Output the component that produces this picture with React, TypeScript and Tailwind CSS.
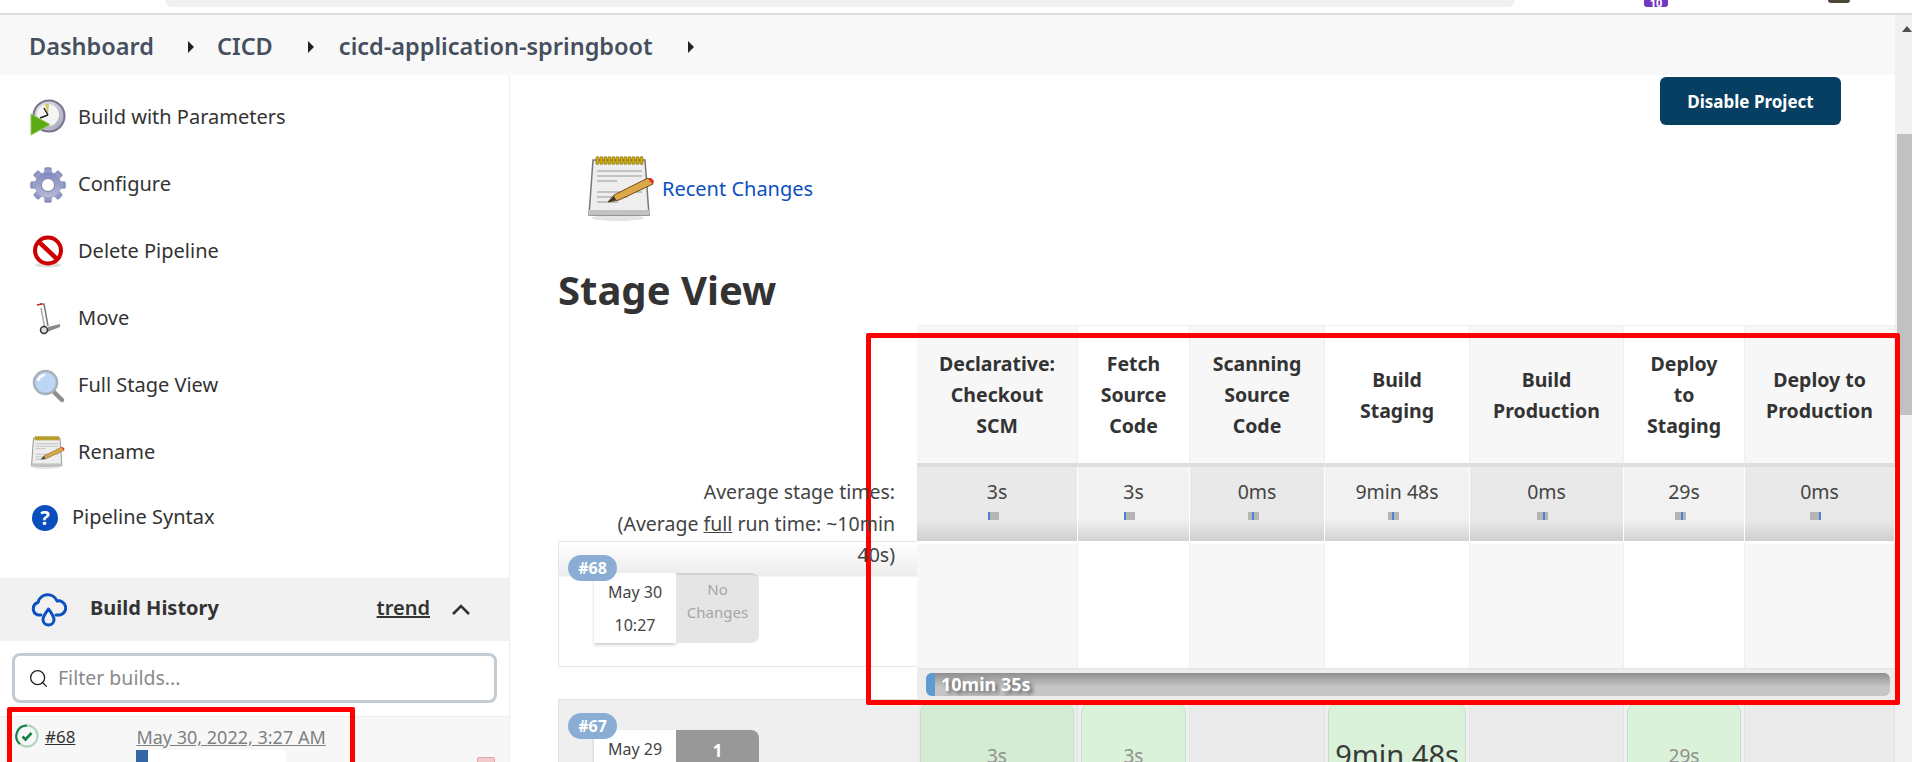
// Jenkins pipeline page with the stage view, annotated with red boxes

import { Search } from 'lucide-react';

// ---------------------------------------------------------------------------
// Data
// ---------------------------------------------------------------------------

const stages = [
  { name: ['Declarative:', 'Checkout', 'SCM'], avg: '3s', mark: 'ml-0', run: '3s', runBg: 'bg-[#d3ecd3]' },
  { name: ['Fetch', 'Source', 'Code'], avg: '3s', mark: 'ml-0', run: '3s', runBg: 'bg-[#d9f2d9]' },
  { name: ['Scanning', 'Source', 'Code'], avg: '0ms', mark: 'ml-[4px]', run: '', runBg: '' },
  { name: ['Build', 'Staging'], avg: '9min 48s', mark: 'ml-[4px]', run: '9min 48s', runBg: 'bg-[#d9f2d9]' },
  { name: ['Build', 'Production'], avg: '0ms', mark: 'ml-[6px]', run: '', runBg: '' },
  { name: ['Deploy', 'to', 'Staging'], avg: '29s', mark: 'ml-[6px]', run: '29s', runBg: 'bg-[#d9f2d9]' },
  { name: ['Deploy to', 'Production'], avg: '0ms', mark: 'ml-[9px]', run: '', runBg: '' },
];

// ---------------------------------------------------------------------------
// Icons
// ---------------------------------------------------------------------------

function BuildIcon() {
  return (
    <svg width="36" height="37" viewBox="0 0 36 37">
      <defs>
        <linearGradient id="clockFace" x1="0" y1="0" x2="1" y2="1">
          <stop offset="0" stopColor="#e4e4ea" />
          <stop offset="1" stopColor="#a5a5b6" />
        </linearGradient>
      </defs>
      <circle cx="19" cy="17" r="15.5" fill="url(#clockFace)" stroke="#77728e" strokeWidth="2" />
      <circle cx="18" cy="16" r="11" fill="#f5f5f3" />
      <path d="M18 16 L15 5 A11 11 0 0 1 19 5 Z" fill="#d8c46c" />
      <path d="M18 16 L14 9 M18 16 L10 19" stroke="#222" strokeWidth="1.5" fill="none" />
      <path d="M1 15 L20 25.5 L1 36 Z" fill="#5cab12" stroke="#8fc760" strokeWidth="1" />
    </svg>
  );
}

function GearIcon() {
  return (
    <svg width="36" height="36" viewBox="0 0 36 36">
      <defs>
        <linearGradient id="gearFill" x1="0" y1="0" x2="0" y2="1">
          <stop offset="0" stopColor="#7f8abf" />
          <stop offset="1" stopColor="#b9b9d8" />
        </linearGradient>
      </defs>
      <g fill="url(#gearFill)" stroke="#8a8fa8" strokeWidth="0.5">
        {[0, 45, 90, 135, 180, 225, 270, 315].map((a) => (
          <rect key={a} x="14.5" y="0.5" width="7" height="8" rx="1.5" transform={`rotate(${a} 18 18)`} />
        ))}
        <circle cx="18" cy="18" r="13" />
      </g>
      <circle cx="18" cy="18" r="6.5" fill="#fff" stroke="#7d7f95" strokeWidth="1" />
    </svg>
  );
}

function DeleteIcon() {
  return (
    <svg width="32" height="33" viewBox="0 0 32 33">
      <ellipse cx="16" cy="30" rx="13" ry="2.5" fill="#ddd" />
      <circle cx="16" cy="15.5" r="13" fill="#fff" stroke="#cc0000" strokeWidth="4" />
      <path d="M7 7 L25 24" stroke="#cc0000" strokeWidth="4.5" />
    </svg>
  );
}

function MoveIcon() {
  return (
    <svg width="27" height="32" viewBox="0 0 27 32">
      <path d="M5 1 L9 1 L13 23" stroke="#777" strokeWidth="1.5" fill="none" />
      <path d="M2 2 L7 1" stroke="#cc2222" strokeWidth="1.5" />
      <path d="M6 5 L10 26" stroke="#aaa" strokeWidth="1.5" />
      <path d="M13 24 L25 21 L25 24 L12 29 Z" fill="#8a8a8a" />
      <circle cx="9" cy="27" r="3.5" fill="#ddd" stroke="#333" strokeWidth="1.5" />
    </svg>
  );
}

function MagnifierIcon() {
  return (
    <svg width="33" height="34" viewBox="0 0 33 34">
      <path d="M20 21 L30 31" stroke="#8e8e8e" strokeWidth="4.5" strokeLinecap="round" />
      <circle cx="13.5" cy="13.5" r="11.5" fill="#bcd6f5" stroke="#a9b2bb" strokeWidth="2.5" />
      <path d="M6 12 A8 8 0 0 1 13 6" stroke="#fff" strokeWidth="2.5" fill="none" />
    </svg>
  );
}

function NotepadIcon({ width, height }: { width: number; height: number }) {
  return (
    <svg width={width} height={height} viewBox="0 0 67 65">
      <ellipse cx="30" cy="62" rx="26" ry="3" fill="#e4e4e4" />
      <path d="M5 4 L57 4 L61 59 L1 59 Z" fill="#eeeeee" stroke="#777" strokeWidth="1.5" />
      <rect x="1" y="54" width="60" height="5" fill="#c2c2c2" />
      {[0, 1, 2, 3, 4, 5, 6, 7, 8, 9, 10, 11].map((i) => (
        <rect key={i} x={8 + i * 4} y="0.5" width="3" height="8" rx="1.5" fill="#d3b10f" stroke="#806a00" strokeWidth="0.7" />
      ))}
      <path d="M9 15 H54 M9 20 H54 M9 25 H29 M9 36 H54 M9 41 H40 M9 46 H30" stroke="#b4b4b4" strokeWidth="1.4" />
      <path d="M20 46 L26 39 L60 22 L65 28 L31 44 Z" fill="#dba94a" stroke="#6d4b12" strokeWidth="1" />
      <path d="M60 22 L65 28 L66 25 L63 22 Z" fill="#e22" />
      <path d="M20 46 L26 40 L28 44 Z" fill="#333" />
    </svg>
  );
}

function HelpIcon() {
  return (
    <span className="flex h-[26px] w-[26px] items-center justify-center rounded-full bg-[#0b4fbf] text-[20px] leading-none font-bold text-white">
      ?
    </span>
  );
}

function CloudIcon() {
  return (
    <svg width="37" height="35" viewBox="0 0 37 35" fill="none" stroke="#0b52c0" strokeWidth="3" strokeLinecap="round" strokeLinejoin="round">
      <path d="M11 23 H8 A6.5 6.5 0 0 1 8 10.5 A10 10 0 0 1 27 9 A7 7 0 0 1 30 23 H26" />
      <path d="M18.5 17 C15 22 13 24.5 13 27.5 A5.5 5.5 0 0 0 24 27.5 C24 24.5 22 22 18.5 17 Z" />
    </svg>
  );
}

function CheckIcon() {
  return (
    <svg width="24" height="24" viewBox="0 0 24 24" fill="none">
      <circle cx="12" cy="12" r="10.5" stroke="#a7d6b9" strokeWidth="2" />
      <path d="M12 1.5 A10.5 10.5 0 0 0 5 20" stroke="#138347" strokeWidth="2" />
      <path d="M7.5 12.5 L10.5 15.5 L16.5 9" stroke="#138347" strokeWidth="2.6" />
    </svg>
  );
}

function Caret() {
  return (
    <svg width="6" height="12" viewBox="0 0 6 12">
      <path d="M0 0 L6 6 L0 12 Z" fill="#222" />
    </svg>
  );
}

// ---------------------------------------------------------------------------
// Sidebar
// ---------------------------------------------------------------------------

function SideItem({ icon, label }: { icon: React.ReactNode; label: string }) {
  return (
    <div className="flex h-[67px] flex-none items-center pl-[30px]">
      <span className="flex w-[36px] justify-center">{icon}</span>
      <span className="ml-[12px] pb-[1px] text-[20px] text-[#333]">{label}</span>
    </div>
  );
}

function Sidebar() {
  return (
    <aside className="flex w-[510px] flex-none flex-col border-r border-[#eeeeee] pt-[9px]">
      <SideItem icon={<BuildIcon />} label="Build with Parameters" />
      <SideItem icon={<GearIcon />} label="Configure" />
      <SideItem icon={<DeleteIcon />} label="Delete Pipeline" />
      <SideItem icon={<MoveIcon />} label="Move" />
      <SideItem icon={<MagnifierIcon />} label="Full Stage View" />
      <SideItem icon={<NotepadIcon width={34} height={33} />} label="Rename" />
      <div className="flex h-[63px] flex-none items-center pl-[32px]">
        <HelpIcon />
        <span className="ml-[14px] pb-[1px] text-[20px] text-[#333]">Pipeline Syntax</span>
      </div>

      <div className="mt-[29px] flex h-[63px] flex-none items-center bg-[#f1f1f1] pr-[39px] pl-[30px]">
        <CloudIcon />
        <span className="ml-[23px] pb-[4px] text-[20px] font-bold text-[#333]">Build History</span>
        <span className="ml-auto pb-[4px] text-[20px] font-semibold text-[#333] underline">trend</span>
        <svg className="ml-[22px]" width="18" height="11" viewBox="0 0 18 11" fill="none" stroke="#333" strokeWidth="2.6">
          <path d="M1 10 L9 2 L17 10" />
        </svg>
      </div>

      <div className="mx-[12px] mt-[12px] flex h-[50px] flex-none items-center rounded-[8px] border-[3px] border-[#c3ccd3] bg-white pl-[13px]">
        <Search size={21} strokeWidth={1.5} className="text-[#222]" />
        <span className="ml-[9px] text-[19.5px] text-[#8a8a8a]">Filter builds...</span>
      </div>

      <div className="mt-[13px] flex-1 border-t border-[#eeeeee] bg-[#f7f7f7]">
        <div className="flex items-start pt-[7px] pl-[15px]">
          <CheckIcon />
          <span className="ml-[6px] text-[17px] leading-[26px] text-[#333] underline">#68</span>
          <div className="ml-[61px] flex flex-col">
            <span className="text-[18px] leading-[26px] whitespace-nowrap text-[#808080] underline">May 30, 2022, 3:27 AM</span>
            <div className="h-[12px] w-[150px] bg-white">
              <div className="h-full w-[12px] bg-[#3465a4]" />
            </div>
          </div>
          <div className="mt-[33px] ml-[151px] h-[8px] w-[18px] rounded-t-[2px] border border-[#e6a5a5] bg-[#f3c9c9]" />
        </div>
      </div>
    </aside>
  );
}

// ---------------------------------------------------------------------------
// Stage view
// ---------------------------------------------------------------------------

function ChangeBox({ date, time, children, dark }: { date: string; time: string; children: React.ReactNode; dark?: boolean }) {
  return (
    <div className="ml-[35px] flex h-[70px] w-[165px]">
      <div className="flex w-[82px] flex-col items-center bg-white pt-[3px] text-[16px] leading-[33px] text-[#444] shadow-[0_2px_3px_rgba(0,0,0,0.2)]">
        <span>{date}</span>
        <span>{time}</span>
      </div>
      <div
        className={
          dark
            ? 'flex w-[83px] justify-center rounded-r-[8px] bg-[#989898] pt-[8px] text-[17px] font-bold text-white'
            : 'flex w-[83px] justify-center rounded-r-[8px] border-t-2 border-[#d2d2d2] bg-[#e5e5e5] pt-[3px] text-center text-[15px] leading-[23px] text-[#a5a5a5]'
        }
      >
        {children}
      </div>
    </div>
  );
}

function BuildBadge({ label }: { label: string }) {
  return (
    <span className="absolute top-[13px] left-[9px] z-10 flex h-[26px] w-[49px] items-center justify-center rounded-full bg-[#8aaed3] text-[16px] font-bold text-white">
      {label}
    </span>
  );
}

function StageGrid() {
  return (
    <div className="ml-[48px] grid grid-cols-[359px_161px_112px_135px_145px_154px_121px_150px] grid-rows-[142px_74px_128px_30px_63px]">
      {/* header */}
      <div />
      {stages.map((s, i) => (
        <div
          key={s.avg + i}
          className={
            (i % 2 === 0 ? 'bg-[#f7f7f7]' : 'bg-white') +
            ' flex flex-col items-center justify-center border-t border-r border-b-4 border-t-[#eeeeee] border-r-[#eeeeee] border-b-[#dddddd] text-[19.5px] leading-[31px] font-bold text-[#333]'
          }
        >
          {s.name.map((line) => (
            <span key={line}>{line}</span>
          ))}
        </div>
      ))}

      {/* averages */}
      <div className="relative z-20 pt-[9px] pr-[22px] pl-[44px] text-right text-[19.5px] leading-[31.5px] text-[#444]">
        Average stage times:
        <br />
        (Average <span className="underline">full</span> run time: ~10min 40s)
      </div>
      {stages.map((s, i) => (
        <div
          key={s.avg + i}
          className={
            (i % 2 === 0
              ? 'bg-[linear-gradient(to_bottom,#e9e9e9_0,#e9e9e9_70%,#cfcfcf_100%)]'
              : 'bg-[linear-gradient(to_bottom,#f2f2f2_0,#f2f2f2_70%,#d2d2d2_100%)]') +
            ' flex flex-col items-center border-r border-white pt-[10px] text-[19.5px] leading-[30px] text-[#444]'
          }
        >
          <span>{s.avg}</span>
          <div className="mt-[5px] -ml-[8px] h-[8px] w-[11px] bg-[#b5b5b5]">
            <div className={s.mark + ' h-full w-[2px] bg-[#4d82d0]'} />
          </div>
        </div>
      ))}

      {/* build 68 */}
      <div className="relative mb-[2px] border-t border-b border-l border-[#e6e6e6] bg-[linear-gradient(to_bottom,#ffffff_0,#ececec_34px,#ffffff_35px)] pt-[31px]">
        <BuildBadge label="#68" />
        <ChangeBox date="May 30" time="10:27">
          <span>
            No
            <br />
            Changes
          </span>
        </ChangeBox>
      </div>
      {stages.map((s, i) => (
        <div
          key={s.avg + i}
          className={(i % 2 === 0 ? 'bg-[#f7f7f7]' : 'bg-white') + ' border-t-[3px] border-r border-b border-t-white border-r-[#eeeeee] border-b-[#e4e4e4]'}
        />
      ))}

      {/* total time */}
      <div />
      <div className="col-span-7 bg-[#ececec] pt-[4px] pr-[5px] pl-[9px]">
        <div className="flex h-[23px] overflow-hidden rounded-[6px] bg-[linear-gradient(to_bottom,#8f8f8f_0,#c6c6c6_60%,#c6c6c6_100%)]">
          <div className="w-[9px] bg-[#5f9bd3]" />
          <span className="ml-[6px] text-[18px] leading-[23px] font-bold text-white [text-shadow:3px_3px_4px_rgba(0,0,0,0.55)]">
            10min 35s
          </span>
        </div>
      </div>

      {/* build 67 */}
      <div className="relative border-t border-l border-[#e2e2e2] bg-[#efefef] pt-[30px]">
        <BuildBadge label="#67" />
        <ChangeBox date="May 29" time="" dark>
          1
        </ChangeBox>
      </div>
      {stages.map((s, i) => (
        <div key={s.avg + i} className={(i % 2 === 0 ? 'bg-[#ebebeb]' : 'bg-[#efefef]') + ' overflow-hidden border-r border-[#e2e2e2] px-[3px] pt-[5px]'}>
          {s.run && (
            <div
              className={
                s.runBg +
                ' flex h-[90px] justify-center rounded-t-[8px] border border-[#c9dcc9] whitespace-nowrap ' +
                (s.run.length > 4 ? 'pt-[30px] text-[29px] leading-[40px] text-[#3a3a3a]' : 'pt-[37px] text-[19px] leading-[28px] text-[#909090]')
              }
            >
              {s.run}
            </div>
          )}
        </div>
      ))}
    </div>
  );
}

// ---------------------------------------------------------------------------
// Page
// ---------------------------------------------------------------------------

export default function App() {
  return (
    <div className="relative flex h-[762px] w-[1912px] flex-col overflow-hidden bg-white font-['Noto_Sans',sans-serif]">
      {/* browser strip */}
      <div className="relative h-[15px] flex-none overflow-hidden border-b-2 border-[#dcdcdc]">
        <div className="flex h-[7px] items-start">
          <div className="ml-[165px] h-[7px] w-[1350px] rounded-b-[20px] bg-[#f0f1f3]" />
          <div className="ml-[129px] flex h-[7px] w-[24px] items-end justify-center overflow-hidden rounded-b-[3px] bg-[#7239c0] text-[11px] leading-[9px] font-bold text-white">
            10
          </div>
          <div className="ml-[160px] h-[3px] w-[22px] rounded-b-full bg-[#4c4636]" />
        </div>
      </div>

      <div className="flex min-h-0 flex-1">
        <div className="flex min-w-0 flex-1 flex-col">
          {/* breadcrumb */}
          <nav className="flex h-[60px] flex-none items-center bg-[#f8f8f8] pt-[3px] pl-[29px] text-[23.5px] font-semibold text-[#454f5e]">
            <span>Dashboard</span>
            <span className="mr-[23px] ml-[34px]"><Caret /></span>
            <span>CICD</span>
            <span className="mr-[25px] ml-[35px]"><Caret /></span>
            <span>cicd-application-springboot</span>
            <span className="ml-[35px]"><Caret /></span>
          </nav>

          <div className="flex min-h-0 flex-1">
            <Sidebar />
            <main className="min-w-0 flex-1">
              <div className="flex justify-end pt-[2px] pr-[54px]">
                <button className="h-[48px] w-[181px] rounded-[6px] bg-[#073f62] pt-[1px] text-[17px] font-bold text-white">Disable Project</button>
              </div>
              <div className="mt-[31px] ml-[78px] flex h-[65px] items-center">
                <NotepadIcon width={67} height={65} />
                <span className="ml-[7px] text-[20px] text-[#0b4fbf]">Recent Changes</span>
              </div>
              <h1 className="mt-[44px] ml-[48px] text-[40px] leading-[50px] font-bold text-[#333]">Stage View</h1>
              <div className="mt-[10px]">
                <StageGrid />
              </div>
            </main>
          </div>
        </div>

        {/* scrollbar */}
        <div className="flex w-[17px] flex-none flex-col bg-[#f1f1f1]">
          <svg className="mt-[11px] ml-[7px]" width="10" height="6" viewBox="0 0 10 6">
            <path d="M5 0 L10 6 L0 6 Z" fill="#505050" />
          </svg>
          <div className="mt-[102px] ml-[2px] h-[281px] bg-[#c1c1c1]" />
        </div>
      </div>

      {/* red annotation boxes */}
      <div className="absolute top-[333px] left-[866px] h-[372px] w-[1034px] rounded-[2px] border-[5px] border-[#ff0000]" />
      <div className="absolute top-[707px] left-[7px] h-[70px] w-[348px] rounded-[2px] border-[5px] border-[#ff0000]" />
    </div>
  );
}
